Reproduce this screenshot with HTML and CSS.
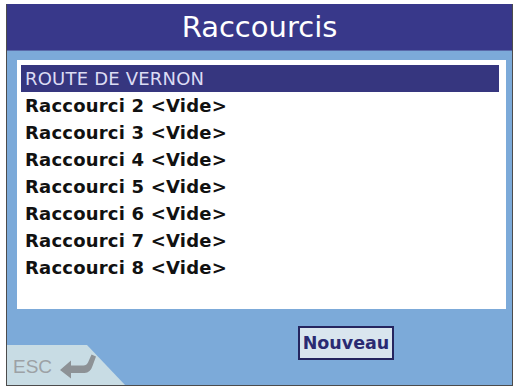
FILE: index.html
```html
<!DOCTYPE html>
<html lang="fr">
<head>
<meta charset="utf-8">
<title>Raccourcis</title>
<link rel="stylesheet" href="styles.css">
</head>
<body>
<div class="frame">
  <div class="title">Raccourcis</div>
  <div class="content">
    <ul class="list">
      <li class="row selected">ROUTE DE VERNON</li>
      <li class="row">Raccourci 2 &lt;Vide&gt;</li>
      <li class="row">Raccourci 3 &lt;Vide&gt;</li>
      <li class="row">Raccourci 4 &lt;Vide&gt;</li>
      <li class="row">Raccourci 5 &lt;Vide&gt;</li>
      <li class="row">Raccourci 6 &lt;Vide&gt;</li>
      <li class="row">Raccourci 7 &lt;Vide&gt;</li>
      <li class="row">Raccourci 8 &lt;Vide&gt;</li>
    </ul>
  </div>
  <div class="bottom">
    <div class="esc">
      <span class="esc-label">ESC</span>
      <svg class="esc-arrow" width="36" height="26" viewBox="0 0 36 26">
        <path d="M0 17 L11 7.5 L11 12.5 L23.5 12.5 Q26.5 12.5 28 9.5 L31.5 1.5 L36 3.5 L32.5 13 Q30.5 19.5 24.5 20 L11 20 L11 25.5 Z" fill="#8d9296"/>
      </svg>
    </div>
    <button class="btn">Nouveau</button>
  </div>
</div>
</body>
</html>
```
FILE: styles.css
```css
html, body {
  margin: 0;
  padding: 0;
  background: #ffffff;
}
body {
  padding: 4px 0 0 6px;
}
.frame {
  width: 505px;
  height: 381px;
  border: 1px solid #4c4c4c;
  border-top: none;
  display: flex;
  flex-direction: column;
  background: #7caad9;
}
.title {
  height: 47px;
  flex: none;
  background: #38388a;
  color: #ffffff;
  font-family: "DejaVu Sans", sans-serif;
  font-size: 29px;
  display: flex;
  align-items: center;
  justify-content: center;
  border-bottom: 1px solid #5a6aaa;
  box-sizing: border-box;
}
.content {
  flex: none;
  padding: 9px 6px 0 10px;
}
.list {
  list-style: none;
  margin: 0;
  padding: 5px 7px 0 4px;
  height: 249px;
  box-sizing: border-box;
  background: #ffffff;
}
.row {
  height: 27px;
  display: flex;
  align-items: center;
  padding-left: 4px;
  font-family: "DejaVu Sans", sans-serif;
  font-weight: bold;
  font-size: 18px;
  color: #111111;
  letter-spacing: 0.2px;
}
.row.selected {
  background: #36367f;
  color: #dcdcf4;
  font-weight: normal;
}
.bottom {
  flex: 1;
  display: flex;
}
.esc {
  align-self: flex-end;
  width: 118px;
  height: 40px;
  background: #c8dce4;
  clip-path: polygon(0 0, 80px 0, 118px 100%, 0 100%);
  display: flex;
  align-items: center;
  padding-left: 6px;
  box-sizing: border-box;
  gap: 8px;
}
.esc-label {
  font-family: "Liberation Sans", Arial, sans-serif;
  font-size: 19px;
  color: #9ca1a5;
  margin-top: 4px;
}
.esc-arrow {
  display: block;
  margin-top: 1px;
}
.btn {
  align-self: flex-start;
  margin: 17px 0 0 173px;
  width: 96px;
  height: 34px;
  padding: 0;
  background: #d9e5ee;
  border: 2px solid #25255f;
  color: #2a2a72;
  font-family: "DejaVu Sans", sans-serif;
  font-weight: bold;
  font-size: 17.5px;
}
```
